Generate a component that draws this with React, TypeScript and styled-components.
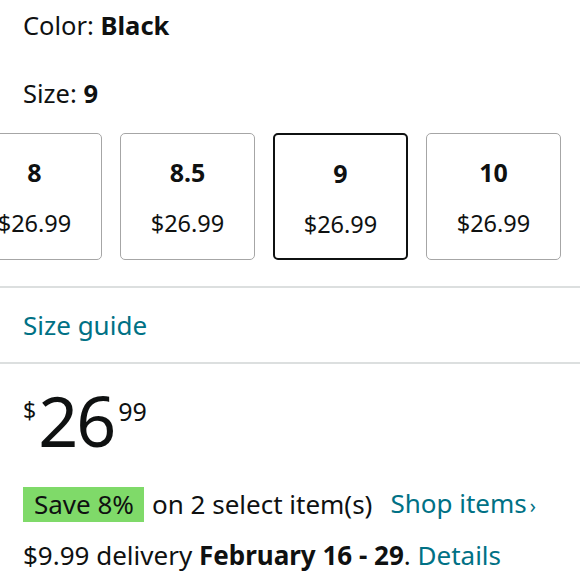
import * as React from "react";
import styled, { createGlobalStyle } from "styled-components";

const Global = createGlobalStyle`
  html, body {
    margin: 0;
    padding: 0;
    background: #fff;
    font-family: "Noto Sans", "Open Sans", sans-serif;
    color: #0f1111;
  }
`;

const Page = styled.div`
  width: 580px;
  height: 580px;
  overflow: hidden;
  display: flex;
  flex-direction: column;
`;

const Label = styled.div`
  padding: 8px 23px 0;
  font-size: 25.5px;
  line-height: 34px;
  height: 34px;
  b {
    font-weight: 700;
  }
`;

const SizeLabel = styled(Label)`
  padding-top: 34px;
`;

const Scroller = styled.div`
  overflow: hidden;
  margin-top: 23px;
  padding-bottom: 26px;
`;

const Track = styled.div`
  display: flex;
  gap: 18px;
  margin-left: -33px;
`;

const SizeBox = styled.div<{ $selected?: boolean }>`
  flex: 0 0 auto;
  box-sizing: border-box;
  width: 135px;
  height: 127px;
  border: ${(p) => (p.$selected ? "2px solid #0f1111" : "1.5px solid #a6a6a6")};
  border-radius: 5px;
  display: flex;
  flex-direction: column;
  align-items: center;
  padding-top: 23px;
`;

const SizeName = styled.div`
  font-size: 25px;
  font-weight: 700;
  line-height: 30px;
`;

const SizePrice = styled.div`
  font-size: 23.5px;
  line-height: 30px;
  margin-top: 21px;
`;

const Divider = styled.div`
  height: 2px;
  background: #dcdfdf;
`;

const LinkRow = styled.div`
  height: 74px;
  box-sizing: border-box;
  padding: 20px 23px 0;
  font-size: 26px;
  line-height: 34px;
  color: #007185;
`;

const PriceRow = styled.div`
  display: flex;
  align-items: flex-start;
  padding: 21px 23px 0;
  height: 123px;
  box-sizing: border-box;
`;

const Currency = styled.span`
  font-size: 23px;
  line-height: 22px;
  margin-top: 14px;
`;

const Cents = styled.span`
  font-size: 25px;
  line-height: 24px;
  margin-top: 14px;
`;

const Whole = styled.span`
  font-size: 70px;
  line-height: 70px;
  letter-spacing: -2px;
  margin: 0 4px 0 2px;
`;

const DealRow = styled.div`
  display: flex;
  align-items: center;
  height: 35px;
  padding: 0 23px;
  font-size: 26px;
  line-height: 35px;
  white-space: nowrap;
`;

const Badge = styled.span`
  background: #7fda69;
  padding: 0 10px 0 11px;
  height: 35px;
  line-height: 35px;
  margin-right: 8px;
`;

const Link = styled.span<{ $gap?: number }>`
  color: #007185;
  margin-left: ${(p) => p.$gap ?? 0}px;
`;

const Chevron = styled.span`
  font-size: 20px;
  margin-left: 3px;
`;

const Delivery = styled.div`
  padding: 16px 23px 0;
  font-size: 26px;
  line-height: 34px;
  white-space: nowrap;
  b {
    font-weight: 700;
  }
`;

const sizes = [
  { name: "8", price: "$26.99" },
  { name: "8.5", price: "$26.99" },
  { name: "9", price: "$26.99", selected: true },
  { name: "10", price: "$26.99" },
];

export default function App() {
  return (
    <Page>
      <Global />
      <Label>
        Color: <b>Black</b>
      </Label>
      <SizeLabel>
        Size: <b>9</b>
      </SizeLabel>
      <Scroller>
        <Track>
          {sizes.map((s) => (
            <SizeBox key={s.name} $selected={s.selected}>
              <SizeName>{s.name}</SizeName>
              <SizePrice>{s.price}</SizePrice>
            </SizeBox>
          ))}
        </Track>
      </Scroller>
      <Divider />
      <LinkRow>Size guide</LinkRow>
      <Divider />
      <PriceRow>
        <Currency>$</Currency>
        <Whole>26</Whole>
        <Cents>99</Cents>
      </PriceRow>
      <DealRow>
        <Badge>Save 8%</Badge>
        on 2 select item(s)
        <Link $gap={18}>
          Shop items<Chevron>›</Chevron>
        </Link>
      </DealRow>
      <Delivery>
        $9.99 delivery <b>February 16 - 29</b>. <Link>Details</Link>
      </Delivery>
    </Page>
  );
}
